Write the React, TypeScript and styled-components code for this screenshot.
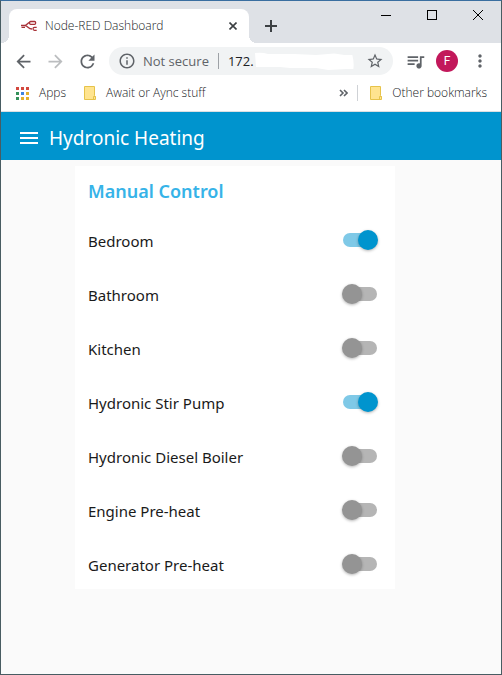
import React, { useState } from "react";
import styled, { createGlobalStyle } from "styled-components";
import {
  MdArrowBack,
  MdArrowForward,
  MdInfoOutline,
  MdMenu,
  MdMoreVert,
  MdQueueMusic,
  MdRefresh,
  MdStarBorder,
} from "react-icons/md";

const GlobalStyle = createGlobalStyle`
  *, *::before, *::after { box-sizing: border-box; }
  body { margin: 0; font-family: "Open Sans", "Noto Sans", sans-serif; }
  button, input { font: inherit; }
`;

const Window = styled.div`
  display: flex;
  flex-direction: column;
  min-height: 100vh;
  border: 1px solid #485c62;
  border-top-color: #3a6ea0;
  background: #fafafa;
`;

const PlainButton = styled.button`
  display: flex;
  align-items: center;
  justify-content: center;
  padding: 0;
  border: 0;
  background: none;
  color: #5f6368;
  flex: none;
  svg { display: block; }
`;

const TabStrip = styled.div`
  display: flex;
  height: 42px;
  padding-left: 8px;
  background: #dee1e6;
`;

const Tab = styled.div`
  position: relative;
  display: flex;
  align-items: center;
  width: 240px;
  margin-top: 8px;
  padding: 0 12px;
  gap: 8px;
  border-radius: 8px 8px 0 0;
  background: #fff;
  color: #202124;
  font-size: 12px;
  font-weight: 300;
  line-height: 16px;
  &::before, &::after {
    content: "";
    position: absolute;
    bottom: 0;
    width: 8px;
    height: 8px;
  }
  &::before {
    right: 100%;
    background: radial-gradient(circle at 0 0, #dee1e6 8px, #fff 8px);
  }
  &::after {
    left: 100%;
    background: radial-gradient(circle at 100% 0, #dee1e6 8px, #fff 8px);
  }
`;

const TabTitle = styled.span`
  flex: 1;
  white-space: nowrap;
`;

const NewTab = styled(PlainButton)`
  width: 28px;
  height: 28px;
  margin: 11px 0 0 8px;
`;

const WindowControls = styled.div`
  display: flex;
  margin-left: auto;
`;

const WindowButton = styled(PlainButton)`
  width: 46px;
  height: 28px;
`;

const Toolbar = styled.div`
  display: flex;
  align-items: center;
  height: 36px;
  padding: 0 5px 0 6px;
  background: #fff;
`;

const NavButton = styled(PlainButton)<{ $dim?: boolean }>`
  width: 32px;
  height: 28px;
  color: ${(p) => (p.$dim ? "#bbbdbf" : "#5f6368")};
`;

const AddressBar = styled.div`
  display: flex;
  align-items: center;
  flex: 1;
  min-width: 0;
  height: 28px;
  margin: 0 6px;
  padding: 0 9px;
  border-radius: 14px;
  background: #f1f3f4;
  color: #5f6368;
  font-size: 13px;
  line-height: 20px;
  white-space: nowrap;
  svg { flex: none; }
`;

const Security = styled.span`
  margin-left: 7px;
  padding-right: 9px;
`;

const Divider = styled.span<{ $light?: boolean }>`
  width: 1px;
  height: 16px;
  flex: none;
  background: ${(p) => (p.$light ? "#cfd2d6" : "#9da1a6")};
`;

const Address = styled.span`
  margin-left: 9px;
  color: #202124;
`;

const AddressMask = styled.svg`
  && { flex: 1; }
  min-width: 0;
  height: 20px;
  margin-right: 12px;
`;

const Avatar = styled(PlainButton)`
  width: 22px;
  height: 22px;
  margin: 0 6px 0 5px;
  border-radius: 50%;
  background: #c2185b;
  color: #fff;
  font-family: Roboto, sans-serif;
  font-size: 12px;
`;

const Bookmarks = styled.nav`
  display: flex;
  align-items: center;
  height: 33px;
  padding: 0 14px 4px 15px;
  border-bottom: 1px solid #dcdfe2;
  background: #fff;
`;

const Bookmark = styled.a`
  display: flex;
  align-items: center;
  gap: 10px;
  margin-right: 18px;
  color: #202124;
  font-size: 12px;
  font-weight: 300;
  line-height: 16px;
  text-decoration: none;
  white-space: nowrap;
  svg { flex: none; }
  &:last-child { margin: 0 0 0 12px; }
`;

const Overflow = styled(PlainButton)`
  margin: 0 9px 0 auto;
`;

const Header = styled.header`
  display: flex;
  align-items: center;
  height: 48px;
  padding: 4px 0 0 16px;
  gap: 8px;
  background: #0094ce;
  color: #fff;
`;

const MenuButton = styled(PlainButton)`
  color: #fff;
`;

const HeaderTitle = styled.h1`
  margin: 0;
  font-family: "Noto Sans", sans-serif;
  font-size: 19px;
  font-weight: 400;
  line-height: 28px;
`;

const Main = styled.main`
  display: flex;
  justify-content: center;
  padding: 6px;
  padding-right: 38px;
`;

const Card = styled.section`
  display: flex;
  flex-direction: column;
  gap: 6px;
  width: 320px;
  padding: 0 13px;
  background: #fff;
  font-family: "Noto Sans", sans-serif;
`;

const CardTitle = styled.h2`
  margin: 0;
  padding-top: 10px;
  height: 45px;
  color: #36b3e8;
  font-size: 18px;
  font-weight: 600;
  line-height: 30px;
`;

const Row = styled.label`
  display: flex;
  align-items: center;
  justify-content: space-between;
  height: 48px;
  color: #1a1a1a;
  font-size: 15px;
  line-height: 24px;
`;

const Toggle = styled.input`
  appearance: none;
  position: relative;
  width: 36px;
  height: 20px;
  margin: 0 4px 2px 0;
  cursor: pointer;
  &::before {
    content: "";
    position: absolute;
    inset: 3px 1px;
    border-radius: 7px;
    background: #b5b5b5;
  }
  &::after {
    content: "";
    position: absolute;
    top: 0;
    left: 0;
    width: 20px;
    height: 20px;
    border-radius: 50%;
    background: #949494;
    box-shadow: 0 1px 3px rgba(0, 0, 0, 0.3);
  }
  &:checked::before { background: #7fc9e7; }
  &:checked::after { left: 16px; background: #0094ce; }
`;

const NodeRedIcon = () => (
  <svg width="16" height="14" viewBox="0 0 16 14" fill="none" stroke="#a83238" strokeWidth="1.3">
    <path d="M0 6.5H3.5C6.5 6.5 6 3.5 9 3.5M3.5 6.5C7 6.5 7 10 11 10" />
    <rect x="8.6" y="2.5" width="6" height="2.8" rx="1" />
    <path d="M.5 8.3H4M15.7 8.3H13.5C11.5 8.3 11.5 11.3 13.5 11.3H15.7" />
  </svg>
);

const FolderIcon = () => (
  <svg width="12" height="14" viewBox="0 0 12 14">
    <path d="M.5.5H10.5V9.5L11.5 10.5V13.5H.5Z" fill="#ffe48f" stroke="#e6c34a" />
    <path d="M9.5 13V10.5H11.5" fill="none" stroke="#e6c34a" />
  </svg>
);

const appColors = [
  "#d3483e", "#d3483e", "#d3483e",
  "#34915a", "#3f84e0", "#e4b02c",
  "#34915a", "#e4b02c", "#e4b02c",
];

const AppsIcon = () => (
  <svg width="13" height="13" viewBox="0 0 13 13">
    {appColors.map((color, i) => (
      <rect key={i} x={(i % 3) * 5} y={Math.floor(i / 3) * 5} width="3" height="3" fill={color} />
    ))}
  </svg>
);

const zones = [
  { name: "Bedroom", on: true },
  { name: "Bathroom", on: false },
  { name: "Kitchen", on: false },
  { name: "Hydronic Stir Pump", on: true },
  { name: "Hydronic Diesel Boiler", on: false },
  { name: "Engine Pre-heat", on: false },
  { name: "Generator Pre-heat", on: false },
];

function ZoneRow({ name, on }: { name: string; on: boolean }) {
  const [checked, setChecked] = useState(on);
  return (
    <Row>
      {name}
      <Toggle type="checkbox" role="switch" checked={checked} onChange={() => setChecked(!checked)} />
    </Row>
  );
}

export default function App() {
  return (
    <>
      <GlobalStyle />
      <Window>
        <TabStrip>
          <Tab>
            <NodeRedIcon />
            <TabTitle>Node-RED Dashboard</TabTitle>
            <PlainButton aria-label="Close tab">
              <svg width="8" height="8" viewBox="0 0 8 8" stroke="#3c4043" strokeWidth="1.6">
                <path d="M.5.5l7 7M7.5.5l-7 7" />
              </svg>
            </PlainButton>
          </Tab>
          <NewTab aria-label="New tab">
            <svg width="12" height="12" viewBox="0 0 12 12" stroke="#3c4043" strokeWidth="2">
              <path d="M6 0v12M0 6h12" />
            </svg>
          </NewTab>
          <WindowControls>
            <WindowButton aria-label="Minimize">
              <svg width="10" height="10" viewBox="0 0 10 10" stroke="#000">
                <path d="M0 5.5h10" />
              </svg>
            </WindowButton>
            <WindowButton aria-label="Maximize">
              <svg width="10" height="10" viewBox="0 0 10 10" stroke="#000" fill="none">
                <rect x=".5" y=".5" width="9" height="9" />
              </svg>
            </WindowButton>
            <WindowButton aria-label="Close window">
              <svg width="10" height="10" viewBox="0 0 10 10" stroke="#000">
                <path d="M0 0l10 10M10 0L0 10" />
              </svg>
            </WindowButton>
          </WindowControls>
        </TabStrip>
        <Toolbar>
          <NavButton aria-label="Back"><MdArrowBack size={21} /></NavButton>
          <NavButton aria-label="Forward" $dim><MdArrowForward size={21} /></NavButton>
          <NavButton aria-label="Reload"><MdRefresh size={21} /></NavButton>
          <AddressBar>
            <MdInfoOutline size={18} />
            <Security>Not secure</Security>
            <Divider />
            <Address>172.</Address>
            <AddressMask viewBox="0 0 100 20" preserveAspectRatio="none">
              <path
                d="M1 2Q8 1 14 3L40 3L62 4L80 2.5L90 4L98 4Q100 12 99 18L92 18L74 19L62 17L36 17L26 16L2 16Z"
                fill="#fff"
              />
            </AddressMask>
            <PlainButton aria-label="Bookmark this page"><MdStarBorder size={18} /></PlainButton>
          </AddressBar>
          <NavButton aria-label="Media controls"><MdQueueMusic size={21} /></NavButton>
          <Avatar aria-label="Profile">F</Avatar>
          <NavButton aria-label="Browser menu"><MdMoreVert size={20} /></NavButton>
        </Toolbar>
        <Bookmarks>
          <Bookmark href="#apps"><AppsIcon />Apps</Bookmark>
          <Bookmark href="#await"><FolderIcon />Await or Aync stuff</Bookmark>
          <Overflow aria-label="More bookmarks">
            <svg width="9" height="8" viewBox="0 0 9 8" fill="none" stroke="#5f6368" strokeWidth="1.6">
              <path d="M1 1l3 3-3 3M5 1l3 3-3 3" />
            </svg>
          </Overflow>
          <Divider $light />
          <Bookmark href="#other"><FolderIcon />Other bookmarks</Bookmark>
        </Bookmarks>
        <Header>
          <MenuButton aria-label="Open menu"><MdMenu size={24} /></MenuButton>
          <HeaderTitle>Hydronic Heating</HeaderTitle>
        </Header>
        <Main>
          <Card>
            <CardTitle>Manual Control</CardTitle>
            {zones.map((zone) => <ZoneRow key={zone.name} {...zone} />)}
          </Card>
        </Main>
      </Window>
    </>
  );
}
